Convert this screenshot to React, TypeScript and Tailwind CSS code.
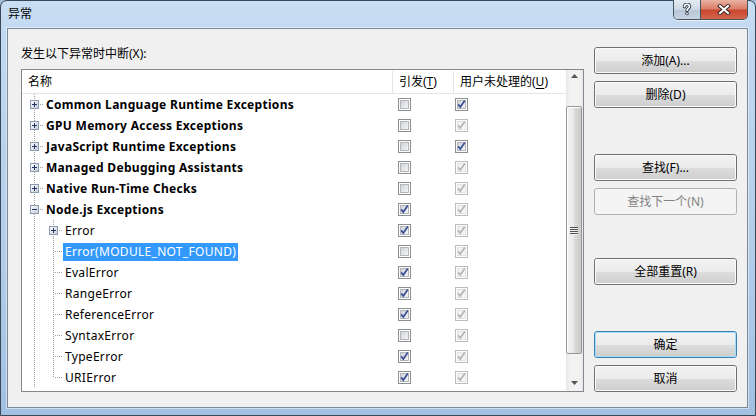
import React, { useId } from "react";

type Row = {
  name: string;
  level: 0 | 1;
  expander?: "plus" | "minus";
  breakOn: boolean;
  unhandled: boolean;
  unhandledEnabled?: boolean;
  selected?: boolean;
  last?: boolean;
};

const rows: Row[] = [
  { name: "Common Language Runtime Exceptions", level: 0, expander: "plus", breakOn: false, unhandled: true, unhandledEnabled: true },
  { name: "GPU Memory Access Exceptions", level: 0, expander: "plus", breakOn: false, unhandled: true },
  { name: "JavaScript Runtime Exceptions", level: 0, expander: "plus", breakOn: false, unhandled: true, unhandledEnabled: true },
  { name: "Managed Debugging Assistants", level: 0, expander: "plus", breakOn: false, unhandled: true },
  { name: "Native Run-Time Checks", level: 0, expander: "plus", breakOn: false, unhandled: true },
  { name: "Node.js Exceptions", level: 0, expander: "minus", breakOn: true, unhandled: true },
  { name: "Error", level: 1, expander: "plus", breakOn: true, unhandled: true },
  { name: "Error(MODULE_NOT_FOUND)", level: 1, breakOn: false, unhandled: true, selected: true },
  { name: "EvalError", level: 1, breakOn: true, unhandled: true },
  { name: "RangeError", level: 1, breakOn: true, unhandled: true },
  { name: "ReferenceError", level: 1, breakOn: true, unhandled: true },
  { name: "SyntaxError", level: 1, breakOn: false, unhandled: true },
  { name: "TypeError", level: 1, breakOn: true, unhandled: true },
  { name: "URIError", level: 1, breakOn: true, unhandled: true, last: true },
];

const font = "font-['Noto_Sans','Noto_Sans_CJK_SC',sans-serif]";

// Win7 style checkbox
function CheckBox({ checked, disabled }: { checked: boolean; disabled?: boolean }) {
  const id = useId();
  return (
    <svg width="13" height="13" viewBox="0 0 13 13" className="block" shapeRendering="crispEdges">
      <defs>
        <linearGradient id={id} x1="0" y1="0" x2="1" y2="1">
          <stop offset="0" stopColor={disabled ? "#f0f0f0" : "#cdd0d5"} />
          <stop offset="1" stopColor={disabled ? "#fafafa" : "#f7f7f7"} />
        </linearGradient>
      </defs>
      <rect x="0.5" y="0.5" width="12" height="12" fill="#fdfdfd" stroke={disabled ? "#bcbcbc" : "#8e8f8f"} />
      <rect x="2.5" y="2.5" width="8" height="8" fill={`url(#${id})`} stroke={disabled ? "#e2e2e2" : "#b3b6ba"} />
      {checked && (
        <path
          d="M3.2 6.4 L5.3 9 L9.8 2.6"
          fill="none"
          stroke={disabled ? "#b4b4b4" : "#3b4f98"}
          strokeWidth="1.7"
          shapeRendering="geometricPrecision"
        />
      )}
    </svg>
  );
}

// one indent column of the tree: dotted guide lines plus an optional expander box
function Guide({
  kind,
  box,
  odd,
}: {
  kind: "pass" | "tee" | "end";
  box?: "plus" | "minus";
  odd: boolean;
}) {
  const dots: React.ReactNode[] = [];
  const vEnd = kind === "end" ? 11 : 21;
  for (let y = odd ? 1 : 0; y < vEnd; y += 2) {
    if (box && y >= 6 && y <= 14) continue;
    dots.push(<rect key={`v${y}`} x="9" y={y} width="1" height="1" fill="#a0a0a0" />);
  }
  if (kind !== "pass") {
    for (let x = box ? 15 : 11; x < 19; x += 2) {
      dots.push(<rect key={`h${x}`} x={x} y="10" width="1" height="1" fill="#a0a0a0" />);
    }
  }
  const id = useId();
  return (
    <svg width="19" height="21" viewBox="0 0 19 21" className="block shrink-0" shapeRendering="crispEdges">
      <defs>
        <linearGradient id={id} x1="0" y1="0" x2="1" y2="1">
          <stop offset="0" stopColor="#ffffff" />
          <stop offset="1" stopColor="#c6ccd6" />
        </linearGradient>
      </defs>
      {dots}
      {box && (
        <g>
          <rect x="5.5" y="6.5" width="8" height="8" fill={`url(#${id})`} stroke="#8a9ab0" />
          <rect x="7" y="10" width="5" height="1" fill="#1f346a" />
          {box === "plus" && <rect x="9" y="8" width="1" height="5" fill="#1f346a" />}
        </g>
      )}
    </svg>
  );
}

function TreeRow({ row, index }: { row: Row; index: number }) {
  const odd = (94 + index * 21) % 2 === 1;
  return (
    <div className="flex h-[21px] shrink-0 items-center">
      <div className="flex h-full w-[370px] items-center pl-[3px]">
        {row.level === 0 ? (
          <Guide kind="tee" box={row.expander} odd={odd} />
        ) : (
          <>
            <Guide kind="pass" odd={odd} />
            <Guide kind={row.last ? "end" : "tee"} box={row.expander} odd={odd} />
          </>
        )}
        <span
          className={`flex h-[18px] items-center whitespace-nowrap px-[2px] text-[12px] leading-none tracking-[0.3px] ${
            row.level === 0 ? "font-bold text-black" : "text-black"
          } ${row.selected ? "bg-[#3399ff] text-white" : ""}`}
        >
          {row.name}
        </span>
      </div>
      <div className="w-[61px] pl-[6px]">
        <CheckBox checked={row.breakOn} />
      </div>
      <div className="w-[113px] pl-[2px]">
        <CheckBox checked={row.unhandled} disabled={!row.unhandledEnabled} />
      </div>
    </div>
  );
}

function ScrollBar() {
  return (
    <div className="flex w-[17px] flex-col bg-[linear-gradient(90deg,#e6e6e6,#f2f2f2_25%,#f2f2f2_80%,#e8e8e8)]">
      <div className="flex h-[17px] justify-center pt-[4px]">
        <svg width="7" height="4" viewBox="0 0 7 4">
          <path d="M3.5 0 L7 4 L0 4 Z" fill="#555" />
        </svg>
      </div>
      <div className="flex-1">
        <div className="ml-0 mt-[19px] flex h-[248px] w-[16px] items-center justify-center rounded-[2px] border border-[#979797] bg-[linear-gradient(90deg,#f4f4f4,#e9e9e9_45%,#d9d9d9_55%,#cbcbcb)] shadow-[inset_1px_1px_0_#ffffff]">
          <div className="flex flex-col gap-[1px]">
            {[0, 1, 2, 3].map((i) => (
              <div key={i} className="h-px w-[8px] bg-[#4f4f4f] shadow-[0_1px_0_#f4f4f4]" />
            ))}
          </div>
        </div>
      </div>
      <div className="flex h-[17px] items-center justify-center">
        <svg width="7" height="4" viewBox="0 0 7 4">
          <path d="M0 0 L7 0 L3.5 4 Z" fill="#555" />
        </svg>
      </div>
    </div>
  );
}

function Button({
  children,
  variant = "normal",
  className = "",
}: {
  children: React.ReactNode;
  variant?: "normal" | "default" | "disabled";
  className?: string;
}) {
  const outer =
    variant === "default"
      ? "border-[#3c7fb1]"
      : variant === "disabled"
      ? "border-[#adb2b5]"
      : "border-[#707070]";
  const inner =
    variant === "disabled"
      ? "bg-[#f4f4f4] text-[#838383] border-[#f4f4f4]"
      : variant === "default"
      ? "bg-[linear-gradient(180deg,#f2f2f2_0%,#ebebeb_50%,#dddddd_51%,#cfcfcf_100%)] border-[#9ee0fb] text-black"
      : "bg-[linear-gradient(180deg,#f2f2f2_0%,#ebebeb_50%,#dddddd_51%,#cfcfcf_100%)] border-[#fbfbfb] text-black";
  return (
    <div className={`h-[27px] w-[143px] rounded-[3px] border ${outer} ${className}`}>
      <div className={`flex h-full items-center justify-center rounded-[2px] border text-[12px] leading-none ${inner}`}>
        {children}
      </div>
    </div>
  );
}

function CaptionButtons() {
  return (
    <div className="-mt-px mr-[7px] flex h-[20px] overflow-hidden rounded-b-[5px] border border-t-0 border-[#45525f] shadow-[0_1px_0_rgba(255,255,255,0.6)]">
      <div className="flex w-[27px] items-center justify-center border-r border-[#45525f] bg-[linear-gradient(180deg,#e4ebf3_0%,#cdd8e4_50%,#b7c6d6_51%,#c6d3e1_100%)]">
        <svg width="10" height="13" viewBox="0 0 10 13">
          <g fill="none" strokeLinecap="round">
            <path d="M2.5 3.8 C2.5 1.8 3.8 1.2 5 1.2 C6.4 1.2 7.5 2 7.5 3.5 C7.5 5.4 5 5.5 5 7.5" stroke="#2e3a48" strokeWidth="3.4" />
            <path d="M2.5 3.8 C2.5 1.8 3.8 1.2 5 1.2 C6.4 1.2 7.5 2 7.5 3.5 C7.5 5.4 5 5.5 5 7.5" stroke="#ffffff" strokeWidth="1.6" />
          </g>
          <circle cx="5" cy="10.6" r="1.7" fill="#2e3a48" />
          <circle cx="5" cy="10.6" r="0.9" fill="#ffffff" />
        </svg>
      </div>
      <div className="flex w-[46px] items-center justify-center bg-[linear-gradient(180deg,#eab2a3_0%,#dc7f69_45%,#c9472f_55%,#d4664a_100%)]">
        <svg width="14" height="11" viewBox="0 0 14 11">
          <g strokeLinecap="square">
            <path d="M3 2 L11 9 M11 2 L3 9" stroke="#3a2a2a" strokeWidth="4" />
            <path d="M3 2 L11 9 M11 2 L3 9" stroke="#ffffff" strokeWidth="2" />
          </g>
        </svg>
      </div>
    </div>
  );
}

export default function App() {
  return (
    <div className={`h-[416px] w-[756px] overflow-hidden bg-[#9fbcd9] ${font}`}>
      <div className="flex h-full w-full flex-col rounded-t-[7px] border border-[#3a4756] bg-[linear-gradient(180deg,#c8def3_0%,#c0d8f0_10%,#b3cde9_60%,#a2c1e2_100%)]">
        {/* caption */}
        <div className="flex h-[27px] shrink-0 items-start">
          <div className="pl-[7px] pt-[5px] text-[12px] leading-[16px] text-black">异常</div>
          <div className="ml-auto">
            <CaptionButtons />
          </div>
        </div>

        {/* client area */}
        <div className="mb-[7px] ml-[6px] mr-[7px] flex flex-1 border border-[#7b8999] bg-[#f0f0f0] shadow-[0_0_0_1px_rgba(255,255,255,0.45)]">
          <div className="ml-[13px] flex w-[563px] flex-col">
            <div className="mt-[17px] h-[16px] text-[12px] leading-[16px] text-black">发生以下异常时中断(X):</div>
            <div className="mt-[7px] flex h-[323px] overflow-hidden border border-[#828790] bg-white">
              <div className="flex w-[544px] flex-col overflow-hidden">
                <div className="flex h-[24px] shrink-0 border-b border-[#e5e5e5] pt-px text-[12px] leading-none text-black">
                  <div className="flex w-[370px] items-center pl-[6px]">名称</div>
                  <div className="flex w-[61px] items-center border-l border-[#e5e5e5] pl-[6px]">
                    引发(<span className="underline underline-offset-2">T</span>)
                  </div>
                  <div className="flex w-[113px] items-center border-l border-[#e5e5e5] pl-[6px]">
                    用户未处理的(<span className="underline underline-offset-2">U</span>)
                  </div>
                </div>
                {rows.map((r, i) => (
                  <TreeRow key={r.name + i} row={r} index={i} />
                ))}
              </div>
              <ScrollBar />
            </div>
          </div>

          <div className="ml-[10px] flex flex-col pt-[18px]">
            <Button>添加(A)...</Button>
            <Button className="mt-[7px]">删除(D)</Button>
            <Button className="mt-[46px]">查找(F)...</Button>
            <Button className="mt-[7px]" variant="disabled">
              查找下一个(N)
            </Button>
            <Button className="mt-[43px]">全部重置(R)</Button>
            <Button className="mt-[46px]" variant="default">
              确定
            </Button>
            <Button className="mt-[7px]">取消</Button>
          </div>
        </div>
      </div>
    </div>
  );
}
